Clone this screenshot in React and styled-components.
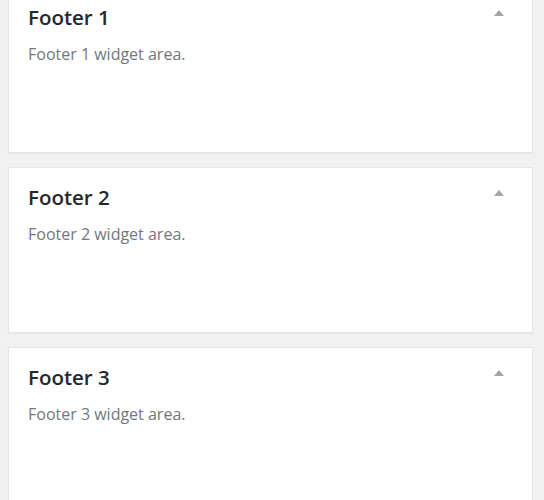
import React from "react";
import styled, { createGlobalStyle } from "styled-components";

const Global = createGlobalStyle`
  html, body {
    margin: 0;
    padding: 0;
    background: #f1f1f1;
  }
  body {
    font-family: "Open Sans", "Liberation Sans", sans-serif;
    overflow: hidden;
  }
`;

const Page = styled.div`
  display: flex;
  flex-direction: column;
  gap: 14px;
  padding: 0 11px 0 8px;
  margin-top: -13px;
`;

const Card = styled.section`
  box-sizing: border-box;
  height: 166px;
  background: #fff;
  border: 1px solid #e5e5e5;
  box-shadow: 0 1px 1px rgba(0, 0, 0, 0.04);
  padding: 15px 28px 0 19px;
  flex-shrink: 0;
`;

const Header = styled.div`
  display: flex;
  justify-content: space-between;
  align-items: flex-start;
`;

const Title = styled.h2`
  margin: 0;
  font-size: 20.5px;
  line-height: 28px;
  font-weight: 600;
  color: #23282d;
`;

const Toggle = styled.svg`
  width: 10px;
  height: 6px;
  margin-top: 7px;
  display: block;
`;

const Desc = styled.p`
  margin: 11px 0 0;
  font-size: 16px;
  line-height: 24px;
  color: #72777c;
`;

const areas = [1, 2, 3];

export default function App() {
  return (
    <>
      <Global />
      <Page>
        {areas.map((n) => (
          <Card key={n}>
            <Header>
              <Title>Footer {n}</Title>
              <Toggle viewBox="0 0 10 6" aria-hidden="true">
                <polygon points="5,0 10,6 0,6" fill="#a0a5aa" />
              </Toggle>
            </Header>
            <Desc>Footer {n} widget area.</Desc>
          </Card>
        ))}
      </Page>
    </>
  );
}
